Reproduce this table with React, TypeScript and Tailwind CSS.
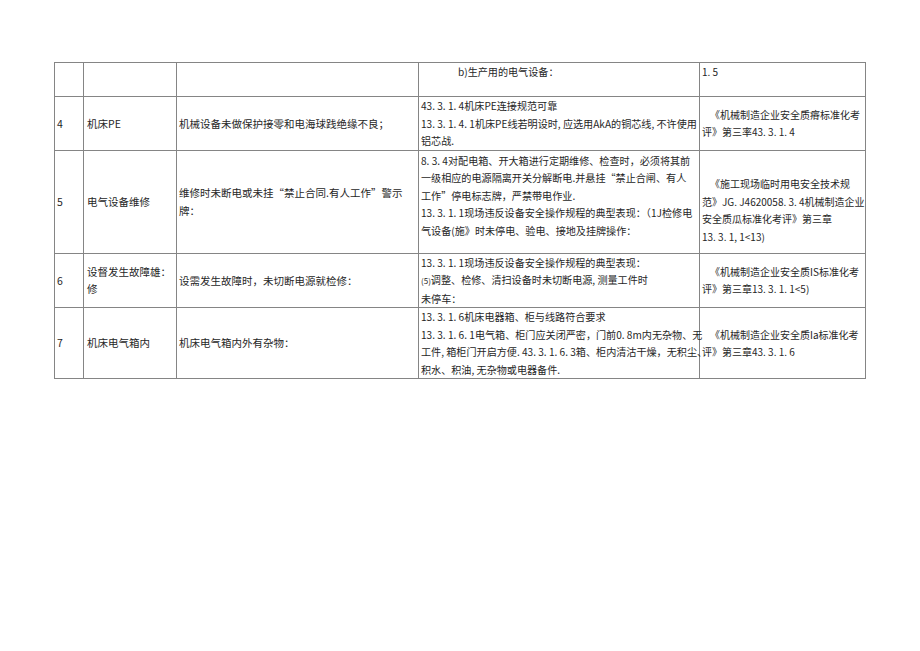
import React from "react";

const F = { fontFamily: '"Noto Sans CJK SC", "Liberation Sans", sans-serif' };

function Lines({ lines, indent }: { lines: string[]; indent?: string }) {
  return (
    <>
      {lines.map((l, i) => (
        <div key={i} className={"whitespace-nowrap " + (i === 0 && indent ? indent : "")}>
          {l}
        </div>
      ))}
    </>
  );
}

const td = "border border-[#858585] p-0 align-middle";
const c4 = " !align-top pl-[2px] text-[10.1px]";
const c5 = " pl-[2px] text-[10px]";

export default function App() {
  return (
    <div className="w-[920px] h-[651px] bg-white text-[#262626]" style={F}>
      <div className="pt-[62px] pl-[54px]">
        <table className="table-fixed border-collapse text-[10.5px] leading-[17.5px] w-[811px]">
          <colgroup>
            <col className="w-[29px]" />
            <col className="w-[93px]" />
            <col className="w-[242px]" />
            <col className="w-[281px]" />
            <col className="w-[166px]" />
          </colgroup>
          <tbody>
            <tr className="h-[34px]">
              <td className={td}></td>
              <td className={td}></td>
              <td className={td}></td>
              <td className={td + c4}>
                <Lines lines={["b)生产用的电气设备："]} indent="pl-[37px]" />
              </td>
              <td className={td + " !align-top" + c5}>
                <Lines lines={["1. 5"]} />
              </td>
            </tr>
            <tr className="h-[52px]">
              <td className={td + " pl-[2px]"}>4</td>
              <td className={td + " pl-[3px]"}>机床PE</td>
              <td className={td + " pl-[2px]"}>机械设备未做保护接零和电海球践绝缘不良；</td>
              <td className={td + c4}>
                <Lines
                  lines={[
                    "43. 3. 1. 4机床PE连接规范可靠",
                    "13. 3. 1. 4. 1机床PE线若明设时, 应选用AkA的铜芯线, 不许使用",
                    "铝芯战.",
                  ]}
                />
              </td>
              <td className={td + c5}>
                <Lines lines={["《机械制造企业安全质瘠标准化考", "评》第三率43. 3. 1. 4"]} indent="pl-[8px]" />
              </td>
            </tr>
            <tr className="h-[103px]">
              <td className={td + " pl-[2px]"}>5</td>
              <td className={td + " pl-[3px]"}>电气设备维修</td>
              <td className={td + " pl-[2px]"}>
                <Lines lines={["维修时未断电或未挂“禁止合同.有人工作”警示", "牌："]} />
              </td>
              <td className={td + c4 + " pt-[1px]"}>
                <Lines
                  lines={[
                    "8. 3. 4对配电箱、开大箱进行定期维修、检查时，必须将其前",
                    "一级相应的电源隔离开关分解断电.并悬挂“禁止合闸、有人",
                    "工作”停电标志牌，严禁带电作业.",
                    "13. 3. 1. 1现场违反设备安全操作规程的典型表现：（1J检修电",
                    "气设备(施》时未停电、验电、接地及挂牌操作：",
                  ]}
                />
              </td>
              <td className={td + c5 + " pt-[17px]"}>
                <Lines
                  lines={[
                    "《施工现场临时用电安全技术规",
                    "范》JG. J4620058. 3. 4机械制造企业",
                    "安全质瓜标准化考评》第三章",
                    "13. 3. 1, 1<13)",
                  ]}
                  indent="pl-[8px]"
                />
              </td>
            </tr>
            <tr className="h-[51px]">
              <td className={td + " pl-[2px]"}>6</td>
              <td className={td + " pl-[3px]"}>
                <Lines lines={["设督发生故障雄：", "修"]} />
              </td>
              <td className={td + " pl-[2px]"}>设需发生故障时，未切断电源就检修：</td>
              <td className={td + c4}>
                <div className="whitespace-nowrap">13. 3. 1. 1现场违反设备安全操作规程的典型表现：</div>
                <div className="whitespace-nowrap">
                  <span className="text-[8px]">(5)</span>调整、检修、清扫设备时未切断电源, 测量工件时
                </div>
                <div className="whitespace-nowrap">未停车：</div>
              </td>
              <td className={td + c5}>
                <Lines lines={["《机械制造企业安全质IS标准化考", "评》第三章13. 3. 1. 1<5)"]} indent="pl-[8px]" />
              </td>
            </tr>
            <tr className="h-[71px]">
              <td className={td + " pl-[2px]"}>7</td>
              <td className={td + " pl-[3px]"}>机床电气箱内</td>
              <td className={td + " pl-[2px]"}>机床电气箱内外有杂物：</td>
              <td className={td + c4}>
                <Lines
                  lines={[
                    "13. 3. 1. 6机床电器箱、柜与线路符合要求",
                    "13. 3. 1. 6. 1电气箱、柜门应关闭严密，门前0. 8m内无杂物、无",
                    "工件, 箱柜门开启方便. 43. 3. 1. 6. 3箱、柜内清沽干燥，无积尘、",
                    "积水、积油, 无杂物或电器备件.",
                  ]}
                />
              </td>
              <td className={td + c5}>
                <Lines lines={["《机械制造企业安全质Ia标准化考", "评》第三章43. 3. 1. 6"]} indent="pl-[8px]" />
              </td>
            </tr>
          </tbody>
        </table>
      </div>
    </div>
  );
}
